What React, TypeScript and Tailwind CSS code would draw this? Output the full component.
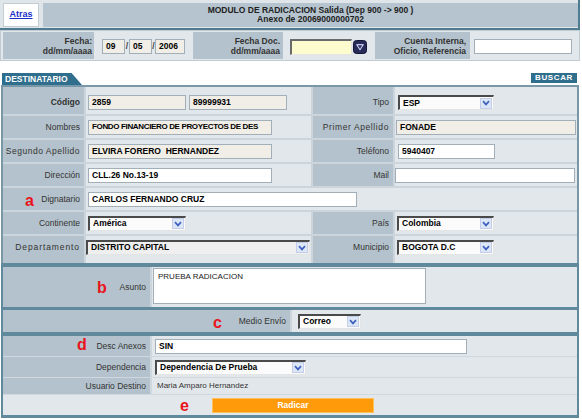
import React from 'react';

const LBL = 'bg-[#b3c2cc]';
const VAL = 'bg-[#e2e7eb]';

function Chevron() {
  return (
    <span className="flex h-[11px] w-[12px] shrink-0 items-center justify-center border border-[#c3cfe6] bg-[#dce6f7]">
      <svg width="8" height="6" viewBox="0 0 8 6">
        <path d="M1 1.2 L4 4.4 L7 1.2" fill="none" stroke="#3f62bd" strokeWidth="1.7" />
      </svg>
    </span>
  );
}

function CalendarIcon() {
  return (
    <svg width="14" height="14" viewBox="0 0 14 14" className="shrink-0">
      <rect x="0.5" y="0.5" width="13" height="13" rx="3" fill="#262b57" stroke="#14173a" />
      <path d="M3.8 4.6 H10.2 L7 9.8 Z" fill="none" stroke="#c9c9f2" strokeWidth="1.1" strokeLinejoin="round" />
    </svg>
  );
}

type FieldProps = { value?: string; w: string; beige?: boolean; bold?: boolean; tight?: boolean };

function Field({ value = '', w, beige, bold = true, tight }: FieldProps) {
  return (
    <div
      className={`flex h-[15px] shrink-0 items-center overflow-hidden whitespace-pre border border-[#a3afb8] pl-[3px] text-black ${
        tight ? 'text-[8px] tracking-[-0.35px]' : 'text-[8.5px]'
      } ${bold ? 'font-bold' : ''} ${beige ? 'bg-[#f1eee7]' : 'bg-white'} ${w}`}
    >
      {value}
    </div>
  );
}

function Select({ value, w, grey }: { value: string; w: string; grey?: boolean }) {
  return (
    <div
      className={`flex h-[15px] shrink-0 items-center border-t-2 border-l-2 border-r border-b border-t-[#4a4a4a] border-l-[#4a4a4a] border-r-[#e4e4e4] border-b-[#e4e4e4] pl-[3px] pr-[1px] ${
        grey ? 'bg-[#efefef]' : 'bg-[#fbfbfb]'
      } ${w}`}
    >
      <span className="flex-1 overflow-hidden whitespace-nowrap text-[8.5px] font-bold text-black">{value}</span>
      <Chevron />
    </div>
  );
}

function Lbl({ children, className = '', mark }: { children: React.ReactNode; className?: string; mark?: React.ReactNode }) {
  return (
    <div className={`relative flex items-center justify-end pr-[4px] text-[8.5px] text-[#333] ${LBL} ${className}`}>
      {mark}
      <span>{children}</span>
    </div>
  );
}

function Val({ children, className = '' }: { children?: React.ReactNode; className?: string }) {
  return <div className={`flex items-center gap-[3px] ${VAL} ${className}`}>{children}</div>;
}

function Mark({ ch, className }: { ch: string; className: string }) {
  return (
    <span className={`absolute text-[16px] font-bold leading-[16px] text-[#e8141c] ${className}`}>{ch}</span>
  );
}

export default function App() {
  return (
    <div className="relative h-[419px] w-[582px] overflow-hidden bg-white font-['Liberation_Sans',Arial,sans-serif]">
      {/* header */}
      <div className="flex h-[30px] w-[580px] gap-[4px] border-r-2 border-b-2 border-[#4e7b90] bg-[#dfe5e9] pt-[3px] pb-[1px] pl-[3px]">
        <div className="flex w-[36px] items-center justify-center border border-[#c3cdd4] bg-white">
          <span className="text-[9px] font-bold text-[#1b2fc9] underline">Atras</span>
        </div>
        <div className="flex flex-1 flex-col items-center justify-center bg-[#b5c4ce] text-[8.5px] font-bold leading-[9px] text-[#222]">
          <div>{'MODULO DE RADICACION Salida (Dep 900 -> 900 )'}</div>
          <div>Anexo de 20069000000702</div>
        </div>
      </div>

      {/* fecha row */}
      <div className="flex h-[31px] w-[580px] gap-[2px] border border-[#c0cbd2] bg-[#e2e7eb] py-[1px] pl-[2px]">
        <div className={`flex w-[91px] flex-col items-end justify-center pr-[2px] text-[8.5px] font-bold leading-[10px] text-[#333] ${LBL}`}>
          <span>Fecha:</span>
          <span>dd/mm/aaaa</span>
        </div>
        <div className="flex w-[95px] items-center pt-[2px] pl-[6px] text-[8.5px] font-bold">
          <Field value="09" w="w-[23px]" beige />
          <span className="w-[4px] text-center text-[#444]">/</span>
          <Field value="05" w="w-[23px]" beige />
          <span className="w-[3px] text-center text-[#444]">/</span>
          <Field value="2006" w="w-[30px]" beige />
        </div>
        <div className={`flex w-[90px] flex-col items-end justify-center pr-[3px] text-[8.5px] font-bold leading-[10px] text-[#333] ${LBL}`}>
          <span>Fecha Doc.</span>
          <span>dd/mm/aaaa</span>
        </div>
        <div className="flex w-[88px] items-center gap-[1px] pt-[2px] pl-[5px]">
          <div className="h-[16px] w-[62px] border-t-2 border-l-2 border-r border-b border-t-[#6a6a6a] border-l-[#6a6a6a] border-r-[#e4e4e4] border-b-[#e4e4e4] bg-[#fdfccf]" />
          <CalendarIcon />
        </div>
        <div className={`flex w-[95px] flex-col items-end justify-center pr-[4px] text-[8.5px] font-bold leading-[10px] text-[#333] ${LBL}`}>
          <span>Cuenta Interna,</span>
          <span>Oficio, Referencia</span>
        </div>
        <div className="flex flex-1 items-center pt-[2px] pl-[2px]">
          <Field w="w-[98px]" />
        </div>
      </div>

      {/* tab row */}
      <div className="mt-[12px] flex h-[12px] items-start justify-between">
        <div className="ml-[2px] flex h-[12px] w-[80px] items-center bg-[#2f6e8c] pl-[3px] text-[8.5px] font-bold text-white [clip-path:polygon(0_0,87%_0,100%_100%,0_100%)]">
          DESTINATARIO
        </div>
        <div className="mr-[5px] h-[10px] w-[46px] bg-[#2f6e8c] text-center text-[8px] leading-[10px] font-bold tracking-[0.6px] text-white">
          BUSCAR
        </div>
      </div>

      {/* destinatario panel */}
      <div className="ml-[1px] grid w-[578px] grid-cols-[81px_225px_80px_1fr] gap-[2px] border-x-2 border-t-2 border-[#7898a8] bg-[#cbd5db]">
        <Lbl className="h-[27px] pt-[4px] font-bold">Código</Lbl>
        <Val className="h-[27px] pt-[4px] pl-[2px]">
          <Field value="2859" w="w-[98px]" beige />
          <Field value="89999931" w="w-[98px]" beige />
        </Val>
        <Lbl className="h-[27px] pt-[4px]">Tipo</Lbl>
        <Val className="h-[27px] pt-[4px] pl-[3px]">
          <Select value="ESP" w="w-[96px]" />
        </Val>

        <Lbl className="h-[22px]">Nombres</Lbl>
        <Val className="h-[22px] pl-[2px]">
          <Field value="FONDO FINANCIERO DE PROYECTOS DE DES" w="w-[184px]" beige tight />
        </Val>
        <Lbl className="h-[22px] tracking-[0.6px]">Primer Apellido</Lbl>
        <Val className="h-[22px] pl-[1px]">
          <Field value="FONADE" w="w-[180px]" beige />
        </Val>

        <Lbl className="h-[22px] tracking-[0.5px]">Segundo Apellido</Lbl>
        <Val className="h-[22px] pl-[2px]">
          <Field value="ELVIRA FORERO  HERNANDEZ" w="w-[184px]" beige />
        </Val>
        <Lbl className="h-[22px]">Teléfono</Lbl>
        <Val className="h-[22px] pl-[3px]">
          <Field value="5940407" w="w-[97px]" />
        </Val>

        <Lbl className="h-[22px]">Dirección</Lbl>
        <Val className="h-[22px] pl-[2px]">
          <Field value="CLL.26 No.13-19" w="w-[184px]" />
        </Val>
        <Lbl className="h-[22px]">Mail</Lbl>
        <Val className="h-[22px]">
          <Field w="w-[180px]" />
        </Val>

        <Lbl className="h-[22px]" mark={<Mark ch="a" className="top-[5px] left-[22px]" />}>
          Dignatario
        </Lbl>
        <Val className="col-span-3 h-[22px] pl-[2px]">
          <Field value="CARLOS FERNANDO CRUZ" w="w-[269px]" />
        </Val>

        <Lbl className="h-[22px]">Continente</Lbl>
        <Val className="h-[22px] pl-[2px]">
          <Select value="América" w="w-[98px]" />
        </Val>
        <Lbl className="h-[22px]">País</Lbl>
        <Val className="h-[22px] pl-[2px]">
          <Select value="Colombia" w="w-[97px]" />
        </Val>

        <Lbl className="h-[27px] pb-[5px] tracking-[0.9px]">Departamento</Lbl>
        <Val className="h-[27px] pb-[5px]">
          <Select value="DISTRITO CAPITAL" w="w-[224px]" grey />
        </Val>
        <Lbl className="h-[27px] pb-[5px]">Municipio</Lbl>
        <Val className="h-[27px] pb-[5px] pl-[2px]">
          <Select value="BOGOTA D.C" w="w-[97px]" />
        </Val>
      </div>

      {/* asunto panel */}
      <div className="ml-[1px] grid w-[578px] grid-cols-[147px_1fr] gap-x-[2px] border-x-2 border-t-4 border-[#60899c] bg-[#cbd5db]">
        <Lbl className="h-[40px] pr-[3px]" mark={<Mark ch="b" className="top-[13px] left-[94px]" />}>
          Asunto
        </Lbl>
        <Val className="h-[40px] items-start pt-[1px] pl-[1px]">
          <div className="h-[36px] w-[273px] border border-[#a3afb8] bg-white px-[4px] pt-[2px] text-[8px] text-[#222]">
            PRUEBA RADICACION
          </div>
        </Val>
      </div>

      {/* medio envio panel */}
      <div className="ml-[1px] grid w-[578px] grid-cols-[287px_1fr] gap-x-[2px] border-x-2 border-t-[3px] border-[#60899c] bg-[#cbd5db]">
        <Lbl className="h-[22px] pr-[3px]" mark={<Mark ch="c" className="top-[5px] left-[210px]" />}>
          Medio Envío
        </Lbl>
        <Val className="h-[22px] pl-[6px]">
          <Select value="Correo" w="w-[63px]" />
        </Val>
      </div>

      {/* anexos panel */}
      <div className="ml-[1px] grid w-[578px] grid-cols-[147px_1fr] gap-x-[2px] gap-y-[1px] border-x-2 border-t-4 border-b-[3px] border-[#60899c] bg-[#cfd8de]">
        <Lbl className="h-[20px] pr-[3px]" mark={<Mark ch="d" className="top-[1px] left-[74px]" />}>
          Desc Anexos
        </Lbl>
        <Val className="h-[20px] pl-[3px]">
          <Field value="SIN" w="w-[312px]" />
        </Val>

        <Lbl className="h-[20px] pr-[3px]">Dependencia</Lbl>
        <Val className="h-[20px] pl-[3px]">
          <Select value="Dependencia De Prueba" w="w-[151px]" />
        </Val>

        <Lbl className="h-[16px] pr-[3px]">Usuario Destino</Lbl>
        <Val className="h-[16px] pl-[5px] text-[8px] text-[#333]">Maria Amparo Hernandez</Val>

        <div className={`relative col-span-2 flex h-[20px] items-center justify-center pl-[6px] ${VAL}`}>
          <Mark ch="e" className="top-[3px] left-[177px]" />
          <div className="flex h-[15px] w-[162px] items-center justify-center border border-[#ffc25a] bg-[#ff9a0a] text-[8.5px] font-bold text-white">
            Radicar
          </div>
        </div>
      </div>
    </div>
  );
}
